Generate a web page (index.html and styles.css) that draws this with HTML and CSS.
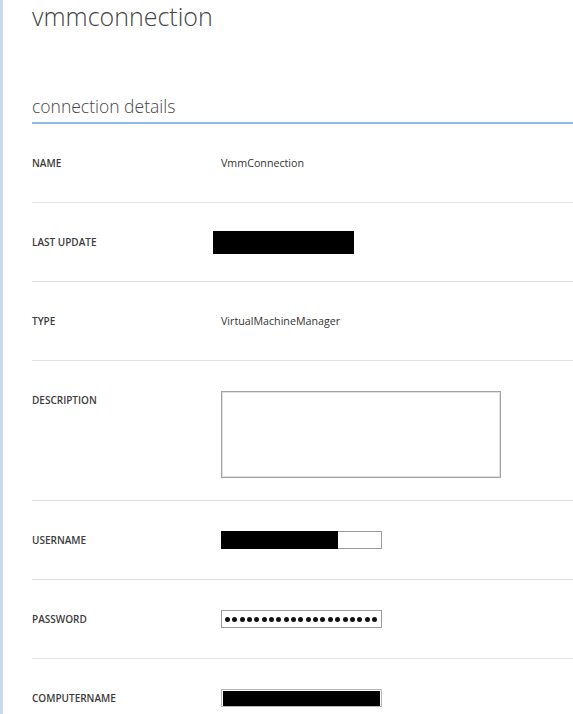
FILE: index.html
```html
<!DOCTYPE html>
<html lang="en">
<head>
<meta charset="utf-8">
<title>vmmconnection</title>
<link rel="stylesheet" href="styles.css">
</head>
<body>
<div class="page">
  <h1 class="title">vmmconnection</h1>
  <h2 class="section">connection details</h2>
  <div class="rows">
    <div class="row">
      <div class="label">NAME</div>
      <div class="value">VmmConnection</div>
    </div>
    <div class="row">
      <div class="label">LAST UPDATE</div>
      <div class="value"><span class="redact-date"></span></div>
    </div>
    <div class="row">
      <div class="label">TYPE</div>
      <div class="value">VirtualMachineManager</div>
    </div>
    <div class="row row-top">
      <div class="label">DESCRIPTION</div>
      <div class="value"><div class="textarea"></div></div>
    </div>
    <div class="row">
      <div class="label">USERNAME</div>
      <div class="value"><div class="field"><span class="redact-user"></span></div></div>
    </div>
    <div class="row">
      <div class="label">PASSWORD</div>
      <div class="value">
        <div class="field dots">
          <i></i><i></i><i></i><i></i><i></i><i></i><i></i><i></i><i></i><i></i><i></i><i></i><i></i><i></i><i></i><i></i><i></i><i></i><i></i><i></i><i></i>
        </div>
      </div>
    </div>
    <div class="row">
      <div class="label">COMPUTERNAME</div>
      <div class="value"><div class="field field-light"><span class="redact-full"></span></div></div>
    </div>
  </div>
</div>
</body>
</html>
```

FILE: styles.css
```css
html, body {
  margin: 0;
  padding: 0;
  background: #ffffff;
}

body {
  font-family: "Open Sans", "Noto Sans", sans-serif;
  color: #333333;
  overflow: hidden;
}

.page {
  border-left: 3px solid #c9d9ee;
  padding-left: 29px;
  min-height: 714px;
  box-sizing: border-box;
}

.title {
  margin: 0;
  padding-top: 1px;
  font-size: 25px;
  line-height: 31px;
  font-weight: 300;
  color: #444444;
}

.section {
  margin: 62px 0 0 0;
  font-size: 17.5px;
  line-height: 24px;
  font-weight: 300;
  color: #444444;
  padding-bottom: 4px;
  border-bottom: 2px solid #8dbbe6;
}

.row {
  display: flex;
  align-items: center;
  padding: 30px 0;
  border-bottom: 1px solid #e1e1e1;
}

.row-top {
  align-items: flex-start;
  padding-bottom: 22px;
}

.label {
  width: 189px;
  flex: none;
  font-size: 10px;
  font-weight: 600;
  line-height: 18px;
  color: #3c3c3c;
}

.value {
  font-size: 10.7px;
  line-height: 18px;
  color: #333333;
  min-height: 18px;
  display: flex;
  align-items: center;
}

.redact-date {
  display: block;
  width: 141px;
  height: 23px;
  background: #000000;
  margin: -2.5px 0 -2.5px -8px;
}

.textarea {
  width: 280px;
  height: 87px;
  box-sizing: border-box;
  border: 1px solid #a3a3a3;
  box-shadow: inset 1px 1px 0 #e0e0e0, inset -1px -1px 0 #e0e0e0;
  background: #ffffff;
}

.field {
  width: 161px;
  height: 18px;
  box-sizing: border-box;
  border: 1px solid #9c9c9c;
  background: #ffffff;
  display: flex;
  align-items: stretch;
}

.redact-user {
  display: block;
  width: 117px;
  margin: -1px 0 -1px -1px;
  background: #000000;
}

.field-light {
  border-color: #b5b5b5;
  padding: 1px 1px 0 1px;
}

.redact-full {
  display: block;
  flex: 1;
  background: #000000;
}

.dots {
  align-items: center;
  gap: 2.35px;
  padding-left: 3px;
}

.dots i {
  display: block;
  width: 5px;
  height: 5px;
  border-radius: 50%;
  background: #111111;
  flex: none;
}
```
